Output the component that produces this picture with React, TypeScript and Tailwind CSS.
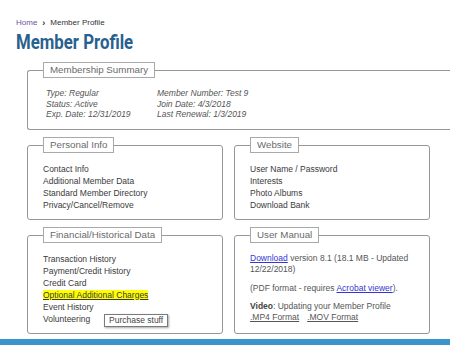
import React from "react";

function Box({
  title,
  className,
  innerClassName,
  children,
}: {
  title: string;
  className?: string;
  innerClassName?: string;
  children: React.ReactNode;
}) {
  return (
    <div className={`flex flex-col ${className ?? ""}`}>
      <div className="relative z-10 -mb-[8px] ml-[16px] self-start whitespace-nowrap border border-[#a9a9a9] bg-white px-[6px] text-[9.75px] leading-[14px] text-[#6a6a6a]">
        {title}
      </div>
      <div
        className={`flex-1 rounded-[3px] border border-[#979797] pl-[15px] pr-[15px] pt-[17px] pb-[8px] ${innerClassName ?? ""}`}
      >
        {children}
      </div>
    </div>
  );
}

export default function App() {
  return (
    <div
      className="relative flex h-[345px] w-[450px] flex-col overflow-hidden bg-white"
      style={{ fontFamily: '"Liberation Sans", Arial, sans-serif' }}
    >
      <div className="px-[16px] pt-[17px]">
        <div className="flex items-center text-[8px] leading-[12px] text-[#333]">
          <span className="text-[#6b55a3]">Home</span>
          <span className="mx-[5px] text-[9px] font-bold text-[#333]">›</span>
          <span>Member Profile</span>
        </div>
        <div className="mt-[3px] h-[21px]">
          <h1
            className="inline-block origin-left scale-x-[0.8] whitespace-nowrap text-[21px] font-bold leading-[21px] text-[#29618e]"
            style={{ fontFamily: "Roboto, sans-serif" }}
          >
            Member Profile
          </h1>
        </div>
      </div>

      <div className="-mr-[60px] ml-[27px] mt-[9px] flex flex-col items-start">
        <div className="flex w-full flex-col">
          <div className="relative z-10 -mb-[8px] ml-[16px] self-start whitespace-nowrap border border-[#a9a9a9] bg-white px-[6px] text-[9.75px] leading-[14px] text-[#6a6a6a]">
            Membership Summary
          </div>
          <div className="rounded-l-[3px] border-y border-l border-[#979797] pb-[9px] pl-[15px] pt-[17px]">
            <div className="grid grid-cols-[111px_1fr] pl-[3px] text-[8.5px] italic leading-[10.5px] text-[#555]">
              <div>
                <div>Type: Regular</div>
                <div>Status: Active</div>
                <div>Exp. Date: 12/31/2019</div>
              </div>
              <div>
                <div>Member Number: Test 9</div>
                <div>Join Date: 4/3/2018</div>
                <div>Last Renewal: 1/3/2019</div>
              </div>
            </div>
          </div>
        </div>

        <div className="mt-[7px] grid grid-cols-[196px_196px] gap-x-[11px] gap-y-[7px]">
          <Box title="Personal Info">
            <div className="text-[8.5px] leading-[12px] text-[#3a3a3a]">
              <div>Contact Info</div>
              <div>Additional Member Data</div>
              <div>Standard Member Directory</div>
              <div>Privacy/Cancel/Remove</div>
            </div>
          </Box>
          <Box title="Website">
            <div className="text-[8.5px] leading-[12px] text-[#3a3a3a]">
              <div>User Name / Password</div>
              <div>Interests</div>
              <div>Photo Albums</div>
              <div>Download Bank</div>
            </div>
          </Box>

          <Box title="Financial/Historical Data">
            <div className="text-[8.5px] leading-[12px] text-[#3a3a3a]">
              <div>Transaction History</div>
              <div>Payment/Credit History</div>
              <div>Credit Card</div>
              <div>
                <span className="bg-[#ffff00] underline">Optional Additional Charges</span>
              </div>
              <div>Event History</div>
              <div className="relative">
                Volunteering
                <div className="absolute left-[61px] top-[1px] flex h-[13px] items-center whitespace-nowrap border border-[#7a7a7a] bg-white px-[4px] text-[8.5px] leading-[11px] text-[#444] shadow-[1px_1px_2px_rgba(0,0,0,0.35)]">
                  Purchase stuff
                </div>
              </div>
            </div>
          </Box>
          <Box title="User Manual">
            <div className="text-[8.5px] leading-[11px] text-[#555]">
              <p>
                <span className="text-[#3535d6] underline">Download</span> version 8.1 (18.1 MB -
                Updated 12/22/2018)
              </p>
              <p className="mt-[8px]">
                (PDF format - requires{" "}
                <span className="text-[#3535d6] underline">Acrobat viewer</span>).
              </p>
              <p className="mt-[7px]">
                <span className="font-bold text-[#444]">Video</span>: Updating your Member Profile
              </p>
              <p>
                <span className="underline">.MP4 Format</span>
                <span className="ml-[8px] underline">.MOV Format</span>
              </p>
            </div>
          </Box>
        </div>
      </div>

      <div className="mt-auto h-[6px] w-full shrink-0 bg-[#3a93cd]" />
    </div>
  );
}
